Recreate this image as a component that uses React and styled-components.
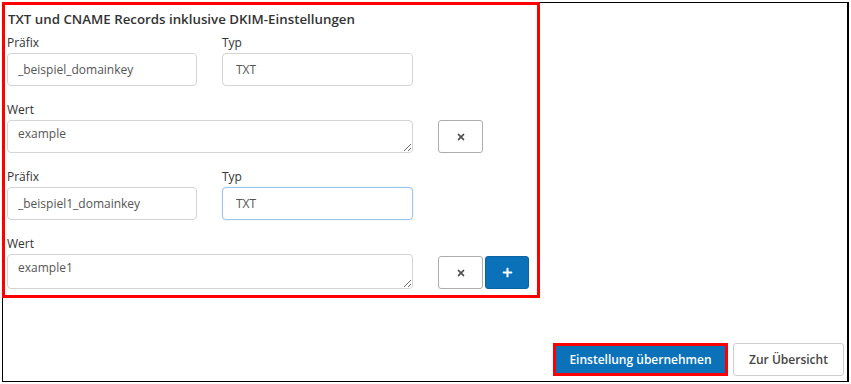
import React from "react";
import styled, { createGlobalStyle } from "styled-components";
import { FaTimes, FaPlus } from "react-icons/fa";

const Global = createGlobalStyle`
  html, body {
    margin: 0;
    padding: 0;
    background: #fff;
  }
  body {
    font-family: "Open Sans", "Liberation Sans", sans-serif;
    color: #333;
  }
`;

const Wrapper = styled.div`
  padding: 2px;
`;

const Frame = styled.div`
  width: 847px;
  height: 380px;
  box-sizing: border-box;
  border: 1px solid #000;
  border-right-width: 2px;
  display: flex;
  flex-direction: column;
`;

const Highlight = styled.section`
  width: 538px;
  height: 296px;
  box-sizing: border-box;
  margin: -1px 0 0 -1px;
  border: 3px solid #f00;
  padding: 4px 0 0 2px;
`;

const Title = styled.h3`
  margin: 0 0 5px 1px;
  font-size: 13.3px;
  line-height: 20px;
  font-weight: 600;
  color: #333;
`;

const Row = styled.div`
  display: flex;
  align-items: flex-end;
  gap: 25px;
  margin-top: ${(p) => (p.$first ? 0 : 15)}px;
`;

const Field = styled.div`
  display: flex;
  flex-direction: column;
  width: ${(p) => p.$width}px;
`;

const Label = styled.label`
  font-size: 12px;
  line-height: 18px;
  margin-bottom: 1px;
  color: #333;
`;

const Input = styled.input`
  box-sizing: border-box;
  height: 33px;
  width: 100%;
  padding: 0 ${(p) => (p.$select ? 13 : 10)}px;
  border: 1px solid ${(p) => (p.$focus ? "#9cc6ea" : "#d4d4d4")};
  border-radius: 4px;
  font-family: inherit;
  font-size: 12px;
  color: #555;
  background: #fff;
  outline: none;
  box-shadow: ${(p) => (p.$focus ? "0 0 2px rgba(102,175,233,0.35)" : "none")};
`;

const Area = styled.textarea`
  box-sizing: border-box;
  height: ${(p) => p.$h || 33}px;
  width: 100%;
  padding: 4px 10px;
  border: 1px solid #d4d4d4;
  border-radius: 4px;
  font-family: inherit;
  font-size: 12px;
  line-height: 17px;
  color: #555;
  outline: none;
  display: block;
`;

const Actions = styled.div`
  display: flex;
  gap: 2px;
`;

const IconButton = styled.button`
  box-sizing: border-box;
  width: ${(p) => (p.$primary ? 44 : 45)}px;
  height: 33px;
  padding: 0;
  display: flex;
  align-items: center;
  justify-content: center;
  border-radius: 3px;
  border: 1px solid ${(p) => (p.$primary ? "#0a64a4" : "#adadad")};
  background: ${(p) => (p.$primary ? "#0b72b9" : "#fff")};
  color: ${(p) => (p.$primary ? "#fff" : "#555")};
  font-size: ${(p) => (p.$primary ? 11 : 10)}px;
`;

const Footer = styled.div`
  margin-top: auto;
  display: flex;
  justify-content: flex-end;
  align-items: flex-end;
  gap: 5px;
  padding: 0 3px 5px 0;
`;

const Marked = styled.div`
  border: 3px solid #f00;
  display: flex;
`;

const Button = styled.button`
  box-sizing: border-box;
  height: ${(p) => (p.$primary ? 27 : 33)}px;
  width: ${(p) => (p.$primary ? 169 : 111)}px;
  padding: 0;
  border-radius: ${(p) => (p.$primary ? 0 : 3)}px;
  border: 1px solid ${(p) => (p.$primary ? "#0b72b9" : "#cfcfcf")};
  background: ${(p) => (p.$primary ? "#0b72b9" : "#fff")};
  color: ${(p) => (p.$primary ? "#fff" : "#444")};
  font-family: inherit;
  font-size: 12px;
  font-weight: 600;
`;

const records = [
  { prefix: "_beispiel_domainkey", value: "example", focus: false, last: false },
  { prefix: "_beispiel1_domainkey", value: "example1", focus: true, last: true },
];

export default function App() {
  return (
    <Wrapper>
      <Global />
      <Frame>
        <Highlight>
          <Title>TXT und CNAME Records inklusive DKIM-Einstellungen</Title>
          {records.map((r, i) => (
            <React.Fragment key={i}>
              <Row $first={i === 0}>
                <Field $width={190}>
                  <Label>Präfix</Label>
                  <Input defaultValue={r.prefix} />
                </Field>
                <Field $width={191}>
                  <Label>Typ</Label>
                  <Input defaultValue="TXT" $select $focus={r.focus} />
                </Field>
              </Row>
              <Row>
                <Field $width={406}>
                  <Label>Wert</Label>
                  <Area defaultValue={r.value} $h={r.last ? 35 : 33} />
                </Field>
                <Actions>
                  <IconButton>
                    <FaTimes />
                  </IconButton>
                  {r.last && (
                    <IconButton $primary>
                      <FaPlus />
                    </IconButton>
                  )}
                </Actions>
              </Row>
            </React.Fragment>
          ))}
        </Highlight>
        <Footer>
          <Marked>
            <Button $primary>Einstellung übernehmen</Button>
          </Marked>
          <Button>Zur Übersicht</Button>
        </Footer>
      </Frame>
    </Wrapper>
  );
}
